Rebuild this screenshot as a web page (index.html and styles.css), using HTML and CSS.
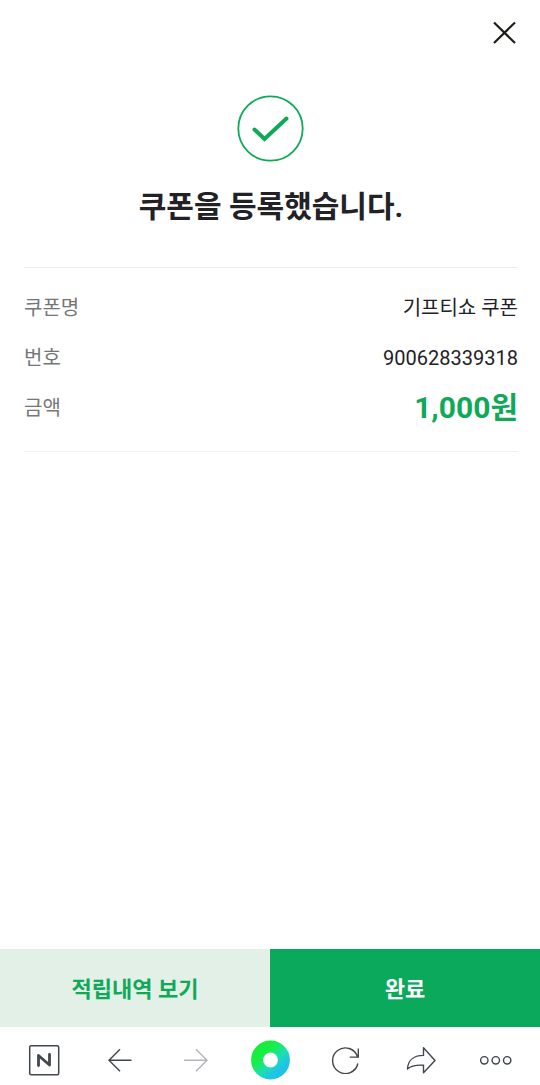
FILE: index.html
```html
<!DOCTYPE html>
<html lang="ko">
<head>
<meta charset="utf-8">
<meta name="viewport" content="width=device-width, initial-scale=1">
<title>쿠폰 등록 완료</title>
<link rel="stylesheet" href="styles.css">
</head>
<body>
<header class="top">
  <button class="icon-button" type="button" aria-label="닫기">
    <svg width="24" height="24" viewBox="0 0 24 24" fill="none" stroke="#1f1e1a" stroke-width="2.200"><path d="M2 1.500 23 22M23 1.500 2 22"/></svg>
  </button>
</header>
<main class="content">
  <section class="result">
    <svg class="result-icon" width="68" height="68" viewBox="0 0 68 68" fill="none" stroke="#0fa958">
      <circle cx="33.500" cy="34.500" r="32.200" stroke-width="1.800"/>
      <path d="M17.500 35.500 27.500 45 49.500 24.500" stroke-width="4" stroke-linecap="round"/>
    </svg>
    <h1 class="title">쿠폰을 등록했습니다.</h1>
  </section>
  <dl class="details">
    <div class="row"><dt>쿠폰명</dt><dd>기프티쇼 쿠폰</dd></div>
    <div class="row"><dt>번호</dt><dd>900628339318</dd></div>
    <div class="row"><dt>금액</dt><dd class="amount">1,000원</dd></div>
  </dl>
</main>
<div class="actions">
  <button class="action action-light" type="button">적립내역 보기</button>
  <button class="action action-primary" type="button">완료</button>
</div>
<nav class="toolbar" aria-label="브라우저 도구">
  <button class="icon-button" type="button" aria-label="홈">
    <svg width="32" height="32" viewBox="0 0 32 32" fill="none" stroke="#41474f"><rect x="1.700" y="1.700" width="29" height="29" rx="1.500" stroke-width="1.500"/><path d="M10.500 21.500V11.500L21.500 21V10.500" stroke-width="2.800" stroke-linecap="round" stroke-linejoin="round"/></svg>
  </button>
  <button class="icon-button" type="button" aria-label="뒤로">
    <svg width="26" height="24" viewBox="0 0 26 24" fill="none" stroke="#41454c" stroke-width="1.400"><path d="M14 1.300 3 12.300 14 23.300M3 12.300H25.500"/></svg>
  </button>
  <button class="icon-button" type="button" aria-label="앞으로">
    <svg width="26" height="24" viewBox="0 0 26 24" fill="none" stroke="#b2b4b8" stroke-width="1.400"><path d="M14 1.300 25 12.300 14 23.300M25 12.300H2"/></svg>
  </button>
  <button class="icon-button" type="button" aria-label="그린닷">
    <svg width="40" height="40" viewBox="0 0 40 40"><defs><linearGradient id="dot" x1="0.200" y1="0.150" x2="0.850" y2="0.850"><stop offset="0" stop-color="#16ee3d"/><stop offset="0.200" stop-color="#18ed50"/><stop offset="0.600" stop-color="#1cdfae"/><stop offset="1" stop-color="#20c3e8"/></linearGradient></defs><circle cx="20.500" cy="20" r="13.400" fill="none" stroke="url(#dot)" stroke-width="12"/></svg>
  </button>
  <button class="icon-button" type="button" aria-label="새로고침">
    <svg width="28" height="28" viewBox="0 0 28 28" fill="none" stroke="#41454c" stroke-width="1.400"><path d="M26.900 17.500A12.800 12.800 0 1 1 26.600 10.800M27.300 2.500V11.100H18.700"/></svg>
  </button>
  <button class="icon-button" type="button" aria-label="공유">
    <svg width="30" height="28" viewBox="0 0 30 28" fill="none" stroke="#41454c" stroke-width="1.400" stroke-linejoin="round"><path d="M17.500 1.800 29 14.500 17.500 26.800V19.200C9 18.600 5 19.800 1.500 23C1.800 15.500 6.500 9.500 17.500 9.400Z"/></svg>
  </button>
  <button class="icon-button" type="button" aria-label="더보기">
    <svg width="34" height="12" viewBox="0 0 34 12" fill="none" stroke="#41454c" stroke-width="1.400"><circle cx="5.300" cy="6.300" r="3.700"/><circle cx="16.800" cy="6.300" r="3.700"/><circle cx="28.200" cy="6.300" r="3.700"/></svg>
  </button>
</nav>
</body>
</html>
```

FILE: styles.css
```css
* {
  box-sizing: border-box;
}

body {
  display: flex;
  flex-direction: column;
  min-height: 100vh;
  margin: 0;
  background: #fff;
  color: #222126;
  font-family: Roboto, "Noto Sans CJK KR", sans-serif;
}

button {
  padding: 0;
  border: 0;
  background: none;
  font-family: inherit;
  cursor: pointer;
}

.icon-button {
  display: flex;
  align-items: center;
  justify-content: center;
}

.top {
  display: flex;
  justify-content: flex-end;
  padding: 21px 24px 0;
}

.content {
  flex: 1;
  padding: 49px 22px 24px 24px;
}

.result {
  display: flex;
  flex-direction: column;
  align-items: center;
  gap: 21px;
}

.title {
  margin: 0;
  font-size: 30px;
  font-weight: 700;
  line-height: 48px;
}

.details {
  display: flex;
  flex-direction: column;
  margin: 36px 0 0;
  padding: 15px 0 18px;
  border-top: 1px solid #ebebed;
  border-bottom: 1px solid #f1f1f2;
}

.row {
  display: flex;
  align-items: center;
  justify-content: space-between;
  min-height: 50px;
  font-size: 20px;
  line-height: 30px;
}

.row dt {
  color: #767678;
}

.row dd {
  margin: 0;
}

.row .amount {
  color: #0fa958;
  font-size: 30px;
  font-weight: 700;
}

.actions {
  display: flex;
}

.action {
  flex: 1;
  height: 78px;
  padding-bottom: 3px;
  font-size: 22px;
  font-weight: 700;
}

.action-light {
  background: #e2f0e8;
  color: #0fa958;
}

.action-primary {
  background: #0ba95b;
  color: #fff;
}

.toolbar {
  display: grid;
  grid-template-columns: repeat(7, 1fr);
  height: 58px;
  padding: 8px 6px 0;
}
```
